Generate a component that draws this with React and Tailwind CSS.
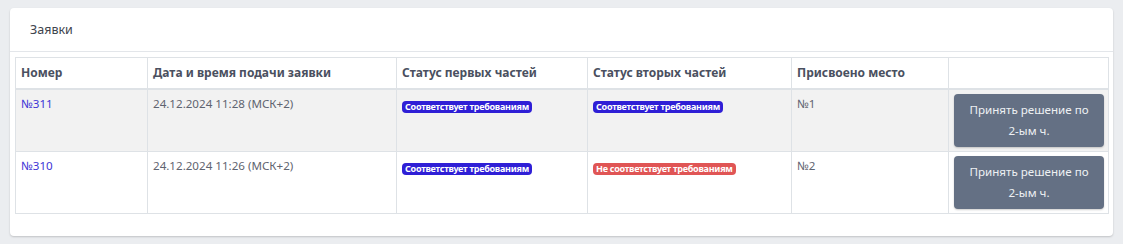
import React from 'react';

const rows = [
  {
    id: '№311',
    date: '24.12.2024 11:28 (МСК+2)',
    first: { ok: true },
    second: { ok: true },
    place: '№1',
  },
  {
    id: '№310',
    date: '24.12.2024 11:26 (МСК+2)',
    first: { ok: true },
    second: { ok: false },
    place: '№2',
  },
];

const Badge = ({ ok }) => (
  <span
    className={
      'inline-block rounded-[4px] px-[3px] text-[9px] font-bold leading-[12px] tracking-[-0.25px] text-white ' +
      (ok ? 'bg-[#2f1fd6]' : 'bg-[#e05555]')
    }
  >
    {ok ? 'Соответствует требованиям' : 'Не соответствует требованиям'}
  </span>
);

export default function App() {
  return (
    <div className="min-h-[244px] bg-[#ebedf0] px-[10px] pt-[8px] font-['Noto_Sans',sans-serif]">
      <div className="rounded-[4px] bg-white pb-[22px] shadow-[0_1px_2px_rgba(0,0,0,0.18)]">
        <div className="border-b border-[#e3e6ea] px-[20px] pt-[13px] pb-[12px] text-[12.5px] leading-[18px] text-[#40444e]">
          Заявки
        </div>
        <div className="px-[5px] pt-[5px]">
          <table className="w-full table-fixed border-collapse text-left">
            <colgroup>
              <col className="w-[132px]" />
              <col className="w-[249px]" />
              <col className="w-[191px]" />
              <col className="w-[204px]" />
              <col className="w-[157px]" />
              <col className="w-[160px]" />
            </colgroup>
            <thead>
              <tr className="h-[31px]">
                {['Номер', 'Дата и время подачи заявки', 'Статус первых частей', 'Статус вторых частей', 'Присвоено место', ''].map((h, i) => (
                  <th
                    key={i}
                    className="border border-b-2 border-[#dee2e6] px-[5px] align-middle text-[12px] font-bold text-[#4a5060]"
                  >
                    {h}
                  </th>
                ))}
              </tr>
            </thead>
            <tbody>
              {rows.map((r, i) => (
                <tr key={r.id} className={i === 0 ? 'bg-[#f2f2f2]' : 'bg-white'}>
                  <td className="border border-[#dee2e6] px-[5px] pt-[6px] align-top text-[11.6px] leading-[16px] text-[#3e35d6]">
                    {r.id}
                  </td>
                  <td className="border border-[#dee2e6] px-[5px] pt-[6px] align-top text-[11.6px] leading-[16px] text-[#5f6470]">
                    {r.date}
                  </td>
                  <td className="border border-[#dee2e6] px-[5px] pt-[8px] align-top leading-[12px]">
                    <Badge ok={r.first.ok} />
                  </td>
                  <td className="border border-[#dee2e6] px-[5px] pt-[8px] align-top leading-[12px]">
                    <Badge ok={r.second.ok} />
                  </td>
                  <td className="border border-[#dee2e6] px-[5px] pt-[6px] align-top text-[11.6px] leading-[16px] text-[#5f6470]">
                    {r.place}
                  </td>
                  <td className="border border-[#dee2e6] pl-[5px] pr-[4px] pt-[4px] pb-[4px] align-top">
                    <button className="h-[53px] w-full rounded-[4px] bg-[#647084] px-[12px] text-[11.6px] leading-[21px] text-[#eef0f3] shadow-[0_1px_2px_rgba(0,0,0,0.2)]">
                      Принять решение по <span className="whitespace-nowrap">2-ым ч.</span>
                    </button>
                  </td>
                </tr>
              ))}
            </tbody>
          </table>
        </div>
      </div>
    </div>
  );
}
